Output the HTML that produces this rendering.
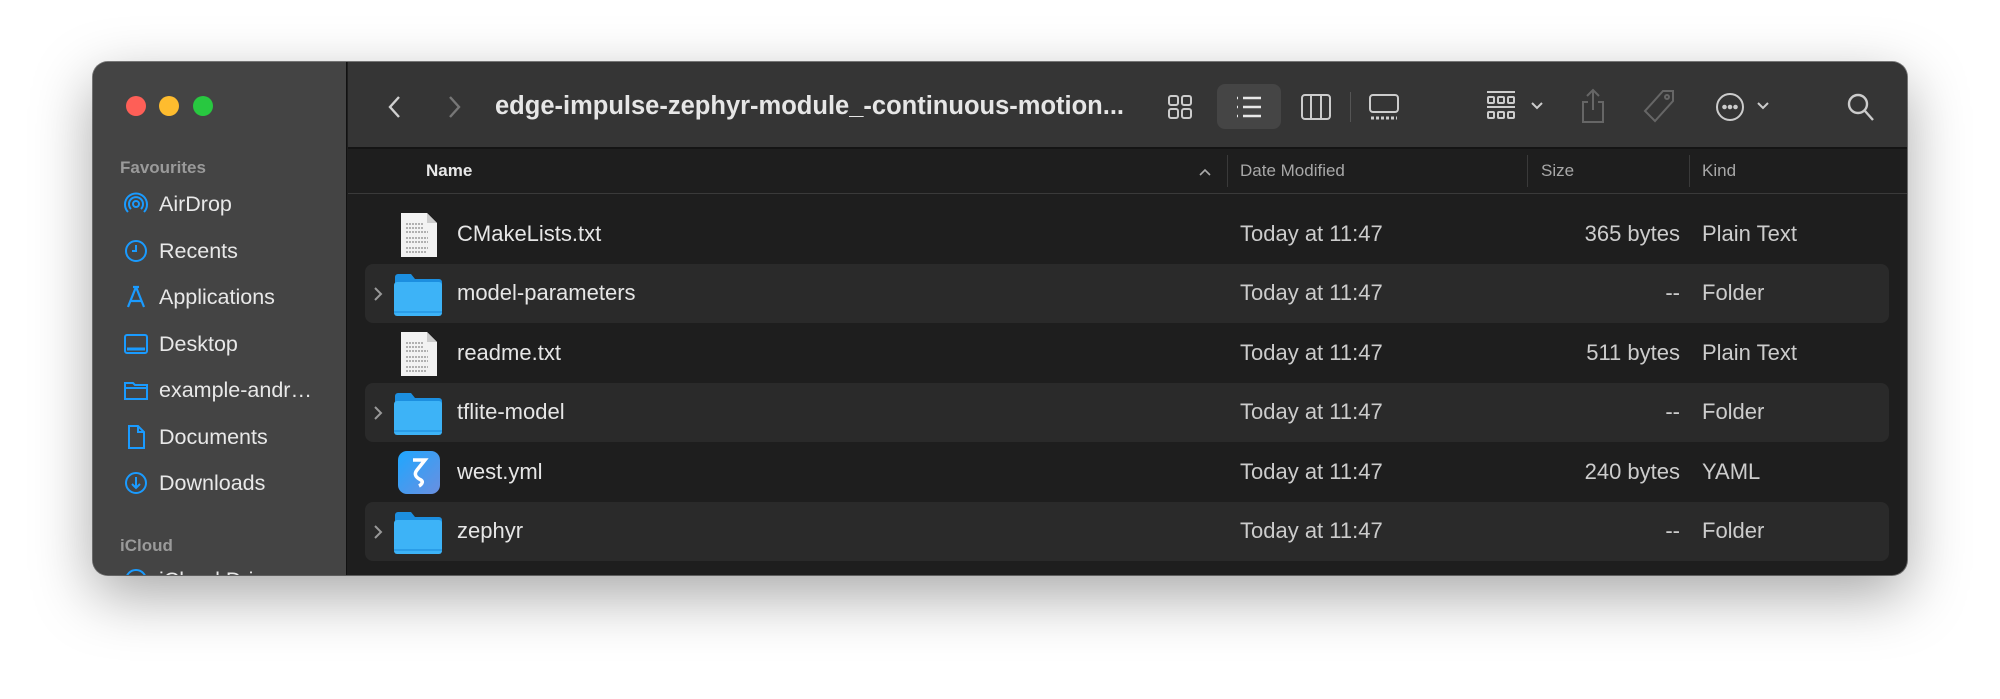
<!DOCTYPE html>
<html><head><meta charset="utf-8"><style>
*{box-sizing:border-box;margin:0;padding:0}
body{width:2000px;height:699px;background:#fff;position:relative;overflow:hidden;font-family:"Liberation Sans",sans-serif;}
.win{position:absolute;left:93px;top:62px;width:1814px;height:513px;border-radius:15px;overflow:hidden;background:#1e1e1e;box-shadow:0 20px 60px rgba(0,0,0,.35),0 0 0 1px rgba(0,0,0,.5);}
.side{position:absolute;left:0;top:0;width:254px;height:100%;background:#444;border-right:1px solid #111;}
.tl{position:absolute;top:34px;width:20px;height:20px;border-radius:50%}
.sec{position:absolute;left:27px;color:#9a9a9a;font-size:17px;font-weight:bold}
.si{position:absolute;left:30px;color:#e8e8e8;font-size:21.5px;display:flex;align-items:center;height:30px}
.si svg{width:26px;height:26px;margin-right:10px}
.tb{position:absolute;left:255px;top:0;right:0;height:87px;background:#353535;border-bottom:2px solid #141414}
.t{position:absolute;color:#e6e6e6}
.hdr{position:absolute;left:255px;top:87px;right:0;height:45px;background:#1e1e1e;border-bottom:1px solid #3a3a3a;color:#a8a8a8;font-size:17px}
.hdr span{position:absolute;top:12px}
.sep{position:absolute;top:6px;width:1px;height:32px;background:#3a3a3a}
.row{position:absolute;left:272px;width:1524px;height:59px;border-radius:8px;color:#e6e6e6;font-size:22px}
.row.alt{background:#2a2a2a}
.row span{position:absolute;top:16px}
.ic{position:absolute}
</style></head><body>
<div class="win">
 <div class="side">
  <div class="tl" style="left:33px;background:#fe5f57"></div>
  <div class="tl" style="left:66px;background:#febc2e"></div>
  <div class="tl" style="left:100px;background:#28c840"></div>
  <div class="sec" style="top:96px">Favourites</div>
  <div class="si" style="top:127px"><svg viewBox="0 0 26 26" fill="none" stroke="#1a9bff" stroke-width="2"><circle cx="13" cy="13" r="3"/><path d="M8 18a7 7 0 1 1 10 0M5 21a11 11 0 1 1 16 0"/></svg>AirDrop</div>
  <div class="si" style="top:174px"><svg viewBox="0 0 26 26" fill="none" stroke="#1a9bff" stroke-width="2"><circle cx="13" cy="13" r="10"/><path d="M13 7v6H9"/></svg>Recents</div>
  <div class="si" style="top:220px"><svg viewBox="0 0 26 26" fill="none" stroke="#1a9bff" stroke-width="2.2"><path d="M13 3l-8 20M13 3l8 20M7 17h12M10 3h6"/></svg>Applications</div>
  <div class="si" style="top:267px"><svg viewBox="0 0 26 26" fill="none" stroke="#1a9bff" stroke-width="2"><rect x="2" y="4" width="22" height="18" rx="2"/><path d="M4 18h18" stroke-width="3"/></svg>Desktop</div>
  <div class="si" style="top:313px"><svg viewBox="0 0 26 26" fill="none" stroke="#1a9bff" stroke-width="2"><path d="M2 6h8l2 2h12v14H2zM2 11h22"/></svg>example-andr…</div>
  <div class="si" style="top:360px"><svg viewBox="0 0 26 26" fill="none" stroke="#1a9bff" stroke-width="2"><path d="M6 2h9l6 6v16H6zM15 2v6h6"/></svg>Documents</div>
  <div class="si" style="top:406px"><svg viewBox="0 0 26 26" fill="none" stroke="#1a9bff" stroke-width="2"><circle cx="13" cy="13" r="10"/><path d="M13 7v11M9 14l4 4 4-4"/></svg>Downloads</div>
  <div class="sec" style="top:474px">iCloud</div>
  <div class="si" style="top:503px"><svg viewBox="0 0 26 26" fill="none" stroke="#1a9bff" stroke-width="2"><circle cx="13" cy="13" r="10"/></svg>iCloud Drive</div>
 </div>
 <div class="tb">
  <svg class="ic" style="left:37px;top:32px" width="20" height="26" viewBox="0 0 20 26" fill="none" stroke="#d0d0d0" stroke-width="2.4"><path d="M14 3L5 13l9 10"/></svg>
  <svg class="ic" style="left:96px;top:32px" width="20" height="26" viewBox="0 0 20 26" fill="none" stroke="#777" stroke-width="2.4"><path d="M6 3l9 10-9 10"/></svg>
  <div class="t" style="left:147px;top:30px;font-size:25.5px;font-weight:bold">edge-impulse-zephyr-module_-continuous-motion...</div>
  <svg class="ic" style="left:819px;top:32px" width="26" height="26" viewBox="0 0 26 26" fill="none" stroke="#ccc" stroke-width="2"><rect x="2" y="2" width="9" height="9" rx="2"/><rect x="15" y="2" width="9" height="9" rx="2"/><rect x="2" y="15" width="9" height="9" rx="2"/><rect x="15" y="15" width="9" height="9" rx="2"/></svg>
  <div style="position:absolute;left:869px;top:22px;width:64px;height:45px;border-radius:8px;background:#454545"></div>
  <svg class="ic" style="left:886px;top:32px" width="30" height="26" viewBox="0 0 30 26" fill="none" stroke="#e8e8e8" stroke-width="2.4"><path d="M3 4h1M3 13h1M3 22h1M9 4h18M9 13h18M9 22h18"/></svg>
  <svg class="ic" style="left:952px;top:31px" width="32" height="28" viewBox="0 0 32 28" fill="none" stroke="#ccc" stroke-width="2"><rect x="2" y="2" width="28" height="24" rx="3"/><path d="M11 2v24M21 2v24"/></svg>
  <div style="position:absolute;left:1002px;top:30px;width:1px;height:30px;background:#555"></div>
  <svg class="ic" style="left:1020px;top:31px" width="32" height="28" viewBox="0 0 32 28" fill="none" stroke="#ccc" stroke-width="2"><rect x="2" y="2" width="28" height="17" rx="3"/><path d="M3 25h26" stroke-dasharray="3 2" stroke-width="3"/></svg>
  <svg class="ic" style="left:1138px;top:28px" width="30" height="32" viewBox="0 0 30 32" fill="none" stroke="#ccc" stroke-width="2"><path d="M1 2h28M1 17h28"/><rect x="2" y="7" width="6" height="6" rx="1"/><rect x="12" y="7" width="6" height="6" rx="1"/><rect x="22" y="7" width="6" height="6" rx="1"/><rect x="2" y="22" width="6" height="6" rx="1"/><rect x="12" y="22" width="6" height="6" rx="1"/><rect x="22" y="22" width="6" height="6" rx="1"/></svg>
  <svg class="ic" style="left:1182px;top:39px" width="14" height="10" viewBox="0 0 14 10" fill="none" stroke="#ccc" stroke-width="2"><path d="M2 2l5 5 5-5"/></svg>
  <svg class="ic" style="left:1232px;top:26px" width="26" height="36" viewBox="0 0 26 36" fill="none" stroke="#666" stroke-width="2"><path d="M13 2v20M7 8l6-6 6 6M8 14H3v20h20V14h-5"/></svg>
  <svg class="ic" style="left:1295px;top:27px" width="32" height="34" viewBox="0 0 32 34" fill="none" stroke="#666" stroke-width="2"><path d="M20 2h10v10L12 32 2 22z"/><circle cx="24" cy="8" r="2"/></svg>
  <svg class="ic" style="left:1367px;top:30px" width="30" height="30" viewBox="0 0 30 30" fill="none" stroke="#ccc" stroke-width="2"><circle cx="15" cy="15" r="13"/><circle cx="9.5" cy="15" r="1.3" fill="#ccc"/><circle cx="15" cy="15" r="1.3" fill="#ccc"/><circle cx="20.5" cy="15" r="1.3" fill="#ccc"/></svg>
  <svg class="ic" style="left:1408px;top:39px" width="14" height="10" viewBox="0 0 14 10" fill="none" stroke="#ccc" stroke-width="2"><path d="M2 2l5 5 5-5"/></svg>
  <svg class="ic" style="left:1498px;top:30px" width="30" height="30" viewBox="0 0 30 30" fill="none" stroke="#ccc" stroke-width="2.4"><circle cx="12" cy="12" r="9"/><path d="M19 19l8 9"/></svg>
 </div>
 <div class="hdr">
  <span style="left:78px;color:#e8e8e8;font-weight:bold">Name</span>
  <svg class="ic" style="left:850px;top:18px" width="14" height="10" viewBox="0 0 14 10" fill="none" stroke="#aaa" stroke-width="1.6"><path d="M2 8l5-5 5 5"/></svg>
  <div class="sep" style="left:879px"></div><span style="left:892px">Date Modified</span>
  <div class="sep" style="left:1179px"></div><span style="left:1193px">Size</span>
  <div class="sep" style="left:1341px"></div><span style="left:1354px">Kind</span>
 </div>
 <div class="row" style="top:143px"><svg class="ic" style="left:35px;top:7px" width="38" height="46" viewBox="0 0 38 46"><path d="M1 1h26l10 10v34H1z" fill="#f2f2f2"/><path d="M27 1v10h10" fill="#ccc"/><path d="M6 12h18M6 16h18M6 20h22M6 26h22M6 30h22M6 36h22M6 40h20" stroke="#999" stroke-width="1.5" stroke-dasharray="2 1"/></svg><span style="left:92px">CMakeLists.txt</span><span style="left:875px;color:#ccc">Today at 11:47</span><span style="right:209px;color:#ccc">365 bytes</span><span style="left:1337px;color:#ccc">Plain Text</span></div>
 <div class="row alt" style="top:202px"><svg class="ic" style="left:7px;top:22px" width="12" height="16" viewBox="0 0 12 16" fill="none" stroke="#999" stroke-width="2"><path d="M3 2l6 6-6 6"/></svg><svg class="ic" style="left:28px;top:9px" width="50" height="43" viewBox="0 0 50 43"><path d="M2 4a3 3 0 0 1 3-3h13l4 5h24a3 3 0 0 1 3 3v6H2z" fill="#1c8fe0"/><rect x="1" y="9" width="48" height="34" rx="3" fill="#3db3f7"/><path d="M1 39h48" stroke="#2a9de8" stroke-width="2"/></svg><span style="left:92px">model-parameters</span><span style="left:875px;color:#ccc">Today at 11:47</span><span style="right:209px;color:#ccc">--</span><span style="left:1337px;color:#ccc">Folder</span></div>
 <div class="row" style="top:262px"><svg class="ic" style="left:35px;top:7px" width="38" height="46" viewBox="0 0 38 46"><path d="M1 1h26l10 10v34H1z" fill="#f2f2f2"/><path d="M27 1v10h10" fill="#ccc"/><path d="M6 12h18M6 16h18M6 20h22M6 26h22M6 30h22M6 36h22M6 40h20" stroke="#999" stroke-width="1.5" stroke-dasharray="2 1"/></svg><span style="left:92px">readme.txt</span><span style="left:875px;color:#ccc">Today at 11:47</span><span style="right:209px;color:#ccc">511 bytes</span><span style="left:1337px;color:#ccc">Plain Text</span></div>
 <div class="row alt" style="top:321px"><svg class="ic" style="left:7px;top:22px" width="12" height="16" viewBox="0 0 12 16" fill="none" stroke="#999" stroke-width="2"><path d="M3 2l6 6-6 6"/></svg><svg class="ic" style="left:28px;top:9px" width="50" height="43" viewBox="0 0 50 43"><path d="M2 4a3 3 0 0 1 3-3h13l4 5h24a3 3 0 0 1 3 3v6H2z" fill="#1c8fe0"/><rect x="1" y="9" width="48" height="34" rx="3" fill="#3db3f7"/><path d="M1 39h48" stroke="#2a9de8" stroke-width="2"/></svg><span style="left:92px">tflite-model</span><span style="left:875px;color:#ccc">Today at 11:47</span><span style="right:209px;color:#ccc">--</span><span style="left:1337px;color:#ccc">Folder</span></div>
 <div class="row" style="top:381px"><svg class="ic" style="left:32px;top:7px" width="44" height="45" viewBox="0 0 44 45"><defs><linearGradient id="g" x1="0" y1="0" x2="1" y2="1"><stop offset="0" stop-color="#1ea7ff"/><stop offset="1" stop-color="#6a8fe0"/></linearGradient></defs><rect x="1" y="1" width="42" height="43" rx="9" fill="url(#g)"/><path d="M16 10h12l-8 10c-4 5 0 8 4 10 3 2 0 5-2 6" fill="none" stroke="#fff" stroke-width="3.5"/></svg><span style="left:92px">west.yml</span><span style="left:875px;color:#ccc">Today at 11:47</span><span style="right:209px;color:#ccc">240 bytes</span><span style="left:1337px;color:#ccc">YAML</span></div>
 <div class="row alt" style="top:440px"><svg class="ic" style="left:7px;top:22px" width="12" height="16" viewBox="0 0 12 16" fill="none" stroke="#999" stroke-width="2"><path d="M3 2l6 6-6 6"/></svg><svg class="ic" style="left:28px;top:9px" width="50" height="43" viewBox="0 0 50 43"><path d="M2 4a3 3 0 0 1 3-3h13l4 5h24a3 3 0 0 1 3 3v6H2z" fill="#1c8fe0"/><rect x="1" y="9" width="48" height="34" rx="3" fill="#3db3f7"/><path d="M1 39h48" stroke="#2a9de8" stroke-width="2"/></svg><span style="left:92px">zephyr</span><span style="left:875px;color:#ccc">Today at 11:47</span><span style="right:209px;color:#ccc">--</span><span style="left:1337px;color:#ccc">Folder</span></div>
</div>
</body></html>
